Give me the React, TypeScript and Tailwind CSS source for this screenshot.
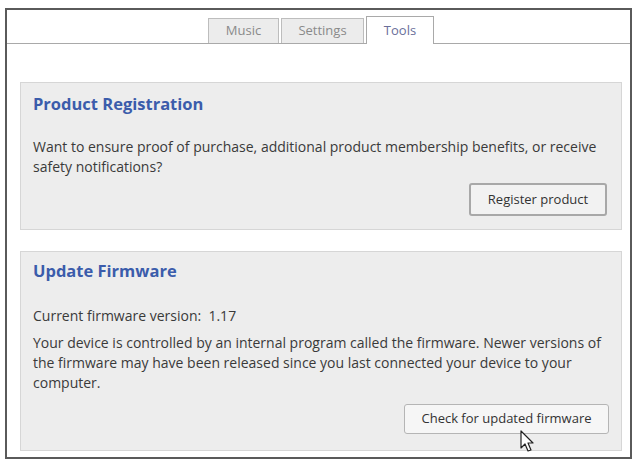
const font = { fontFamily: '"Open Sans", "Noto Sans", sans-serif' };

const Tab = ({ label, active }: { label: string; active?: boolean }) =>
  active ? (
    <div className="-mb-px flex h-[28px] w-[68px] items-center justify-center border border-b-0 border-[#a9a9a9] bg-white text-[13px] text-[#6a6f9a]">
      {label}
    </div>
  ) : (
    <div className="mt-[2px] flex h-[25px] items-center justify-center border border-b-0 border-[#bdbdbd] bg-[#ececec] text-[13px] text-[#8a8a8a]">
      {label}
    </div>
  );

const Cursor = () => (
  <svg width="16" height="24" viewBox="0 0 16 24" className="absolute left-[116px] top-[26px]">
    <path d="M1 1 L1 18 L5 14 L8 21 L11 20 L8 13 L13 13 Z" fill="white" stroke="#222" strokeWidth="1.2" strokeLinejoin="round" />
  </svg>
);

export default function App() {
  return (
    <div className="h-[462px] w-[634px] bg-white pl-[5px] pr-[2px] pt-[8px]" style={font}>
      <div className="flex h-[451px] flex-col border-2 border-[#5a5a5a] bg-white">
        {/* tabs */}
        <div className="flex h-[34px] items-end gap-[2px] border-b border-[#a9a9a9] pl-[201px]">
          <div className="w-[71px]">
            <Tab label="Music" />
          </div>
          <div className="w-[83px]">
            <Tab label="Settings" />
          </div>
          <Tab label="Tools" active />
        </div>

        <div className="flex flex-col gap-[21px] pl-[13px] pr-[8px] pt-[38px]">
          {/* product registration */}
          <div className="h-[148px] border border-[#d6d6d6] bg-[#ededed] pl-[12px] pr-[10px] pt-[9px]">
            <h2 className="text-[16.5px] font-bold text-[#3b5cab]">Product Registration</h2>
            <p className="mt-[20px] text-[14px] leading-[20px] text-[#3a3a3a]">
              Want to ensure proof of purchase, additional product membership benefits, or receive
              <br />
              safety notifications?
            </p>
            <div className="mt-[6px] flex justify-end pr-[4px]">
              <button className="h-[33px] w-[138px] rounded-[3px] border-2 border-[#a8a8a8] bg-[#f2f2f2] text-[13px] text-[#333]">
                Register product
              </button>
            </div>
          </div>

          {/* update firmware */}
          <div className="h-[200px] border border-[#d6d6d6] bg-[#ededed] pl-[12px] pr-[4px] pt-[7px]">
            <h2 className="text-[16.5px] font-bold text-[#3b5cab]">Update Firmware</h2>
            <p className="mt-[21px] text-[14px] text-[#3a3a3a]">
              Current firmware version:&nbsp;&nbsp;1.17
            </p>
            <p className="mt-[7px] whitespace-nowrap text-[14px] leading-[20px] text-[#3a3a3a]">
              Your device is controlled by an internal program called the firmware. Newer versions of
              <br />
              the firmware may have been released since you last connected your device to your
              <br />
              computer.
            </p>
            <div className="mt-[11px] flex justify-end pr-[8px]">
              <div className="relative">
                <button className="h-[30px] w-[205px] rounded-[3px] border border-[#b5b5b5] bg-[#f6f6f6] text-[13px] text-[#333]">
                  Check for updated firmware
                </button>
                <Cursor />
              </div>
            </div>
          </div>
        </div>
      </div>
    </div>
  );
}
